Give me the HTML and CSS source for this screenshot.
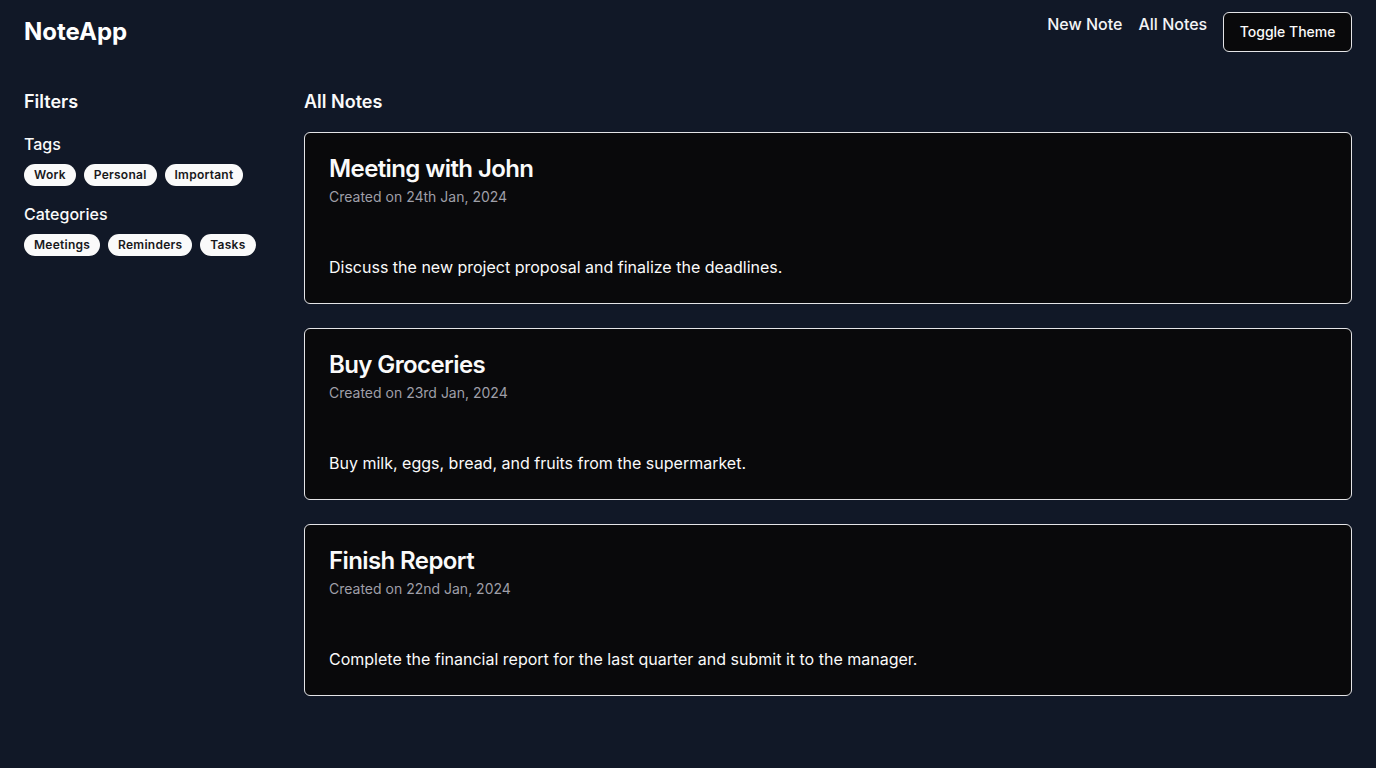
FILE: index.html
```html
<!DOCTYPE html>
<html lang="en">
<head>
<meta charset="utf-8">
<title>NoteApp</title>
<link rel="stylesheet" href="styles.css">
</head>
<body>
<header class="header">
  <div class="logo">NoteApp</div>
  <nav class="nav">
    <a class="nav-link" href="#">New Note</a>
    <a class="nav-link" href="#">All Notes</a>
    <button class="btn">Toggle Theme</button>
  </nav>
</header>
<div class="layout">
  <aside class="sidebar">
    <h2 class="heading">Filters</h2>
    <div class="group">
      <h3 class="group-title">Tags</h3>
      <div class="pills">
        <span class="pill">Work</span>
        <span class="pill">Personal</span>
        <span class="pill">Important</span>
      </div>
    </div>
    <div class="group">
      <h3 class="group-title">Categories</h3>
      <div class="pills">
        <span class="pill">Meetings</span>
        <span class="pill">Reminders</span>
        <span class="pill">Tasks</span>
      </div>
    </div>
  </aside>
  <main class="main">
    <h2 class="heading">All Notes</h2>
    <div class="cards">
      <div class="card">
        <div class="card-header">
          <h3 class="card-title">Meeting with John</h3>
          <p class="card-desc">Created on 24th Jan, 2024</p>
        </div>
        <div class="card-content">Discuss the new project proposal and finalize the deadlines.</div>
      </div>
      <div class="card">
        <div class="card-header">
          <h3 class="card-title">Buy Groceries</h3>
          <p class="card-desc">Created on 23rd Jan, 2024</p>
        </div>
        <div class="card-content">Buy milk, eggs, bread, and fruits from the supermarket.</div>
      </div>
      <div class="card">
        <div class="card-header">
          <h3 class="card-title">Finish Report</h3>
          <p class="card-desc">Created on 22nd Jan, 2024</p>
        </div>
        <div class="card-content">Complete the financial report for the last quarter and submit it to the manager.</div>
      </div>
    </div>
  </main>
</div>
</body>
</html>
```

FILE: styles.css
```css
* { box-sizing: border-box; }
html, body { margin: 0; padding: 0; }
body {
  background: #111827;
  color: #fafafa;
  font-family: Inter, "Noto Sans", sans-serif;
  min-height: 768px;
}
.header {
  display: flex;
  justify-content: space-between;
  align-items: center;
  padding: 12px 24px;
  height: 64px;
}
.logo {
  font-size: 24px;
  line-height: 32px;
  font-weight: 700;
  color: #ffffff;
}
.nav {
  display: flex;
  align-items: flex-start;
  gap: 16px;
  align-self: flex-start;
}
.nav-link {
  color: #f3f4f6;
  text-decoration: none;
  font-size: 16px;
  line-height: 24px;
  font-weight: 500;
}
.btn {
  height: 40px;
  padding: 0 15.5px 2px;
  background: #09090b;
  color: #fafafa;
  border: 1px solid #e4e4e7;
  border-radius: 6px;
  font-family: inherit;
  font-size: 14px;
  font-weight: 500;
}
.layout {
  display: flex;
  gap: 24px;
  padding: 24px 24px;
}
.sidebar {
  width: 256px;
  flex: none;
}
.main {
  flex: 1;
}
.heading {
  margin: 0 0 16px;
  font-size: 18px;
  line-height: 28px;
  font-weight: 600;
}
.group { margin-bottom: 16px; }
.group-title {
  margin: 0 0 8px;
  font-size: 16px;
  line-height: 24px;
  font-weight: 500;
}
.pills {
  display: flex;
  gap: 8px;
}
.pill {
  display: inline-flex;
  align-items: center;
  height: 22px;
  padding: 0 10px 1px;
  border-radius: 9999px;
  background: #fafafa;
  color: #18181b;
  font-size: 12px;
  font-weight: 600;
  letter-spacing: 0.25px;
}
.cards {
  display: flex;
  flex-direction: column;
  gap: 24px;
}
.card {
  background: #09090b;
  border: 1px solid #e4e4e7;
  border-radius: 6px;
}
.card-header {
  padding: 24px;
  display: flex;
  flex-direction: column;
  gap: 6px;
}
.card-title {
  margin: 0;
  font-size: 24px;
  line-height: 24px;
  font-weight: 600;
  letter-spacing: -0.6px;
}
.card-desc {
  margin: 0;
  font-size: 14px;
  line-height: 20px;
  color: #9f9fa8;
}
.card-content {
  padding: 24px;
  font-size: 16px;
  line-height: 24px;
  color: #fafafa;
}
```
